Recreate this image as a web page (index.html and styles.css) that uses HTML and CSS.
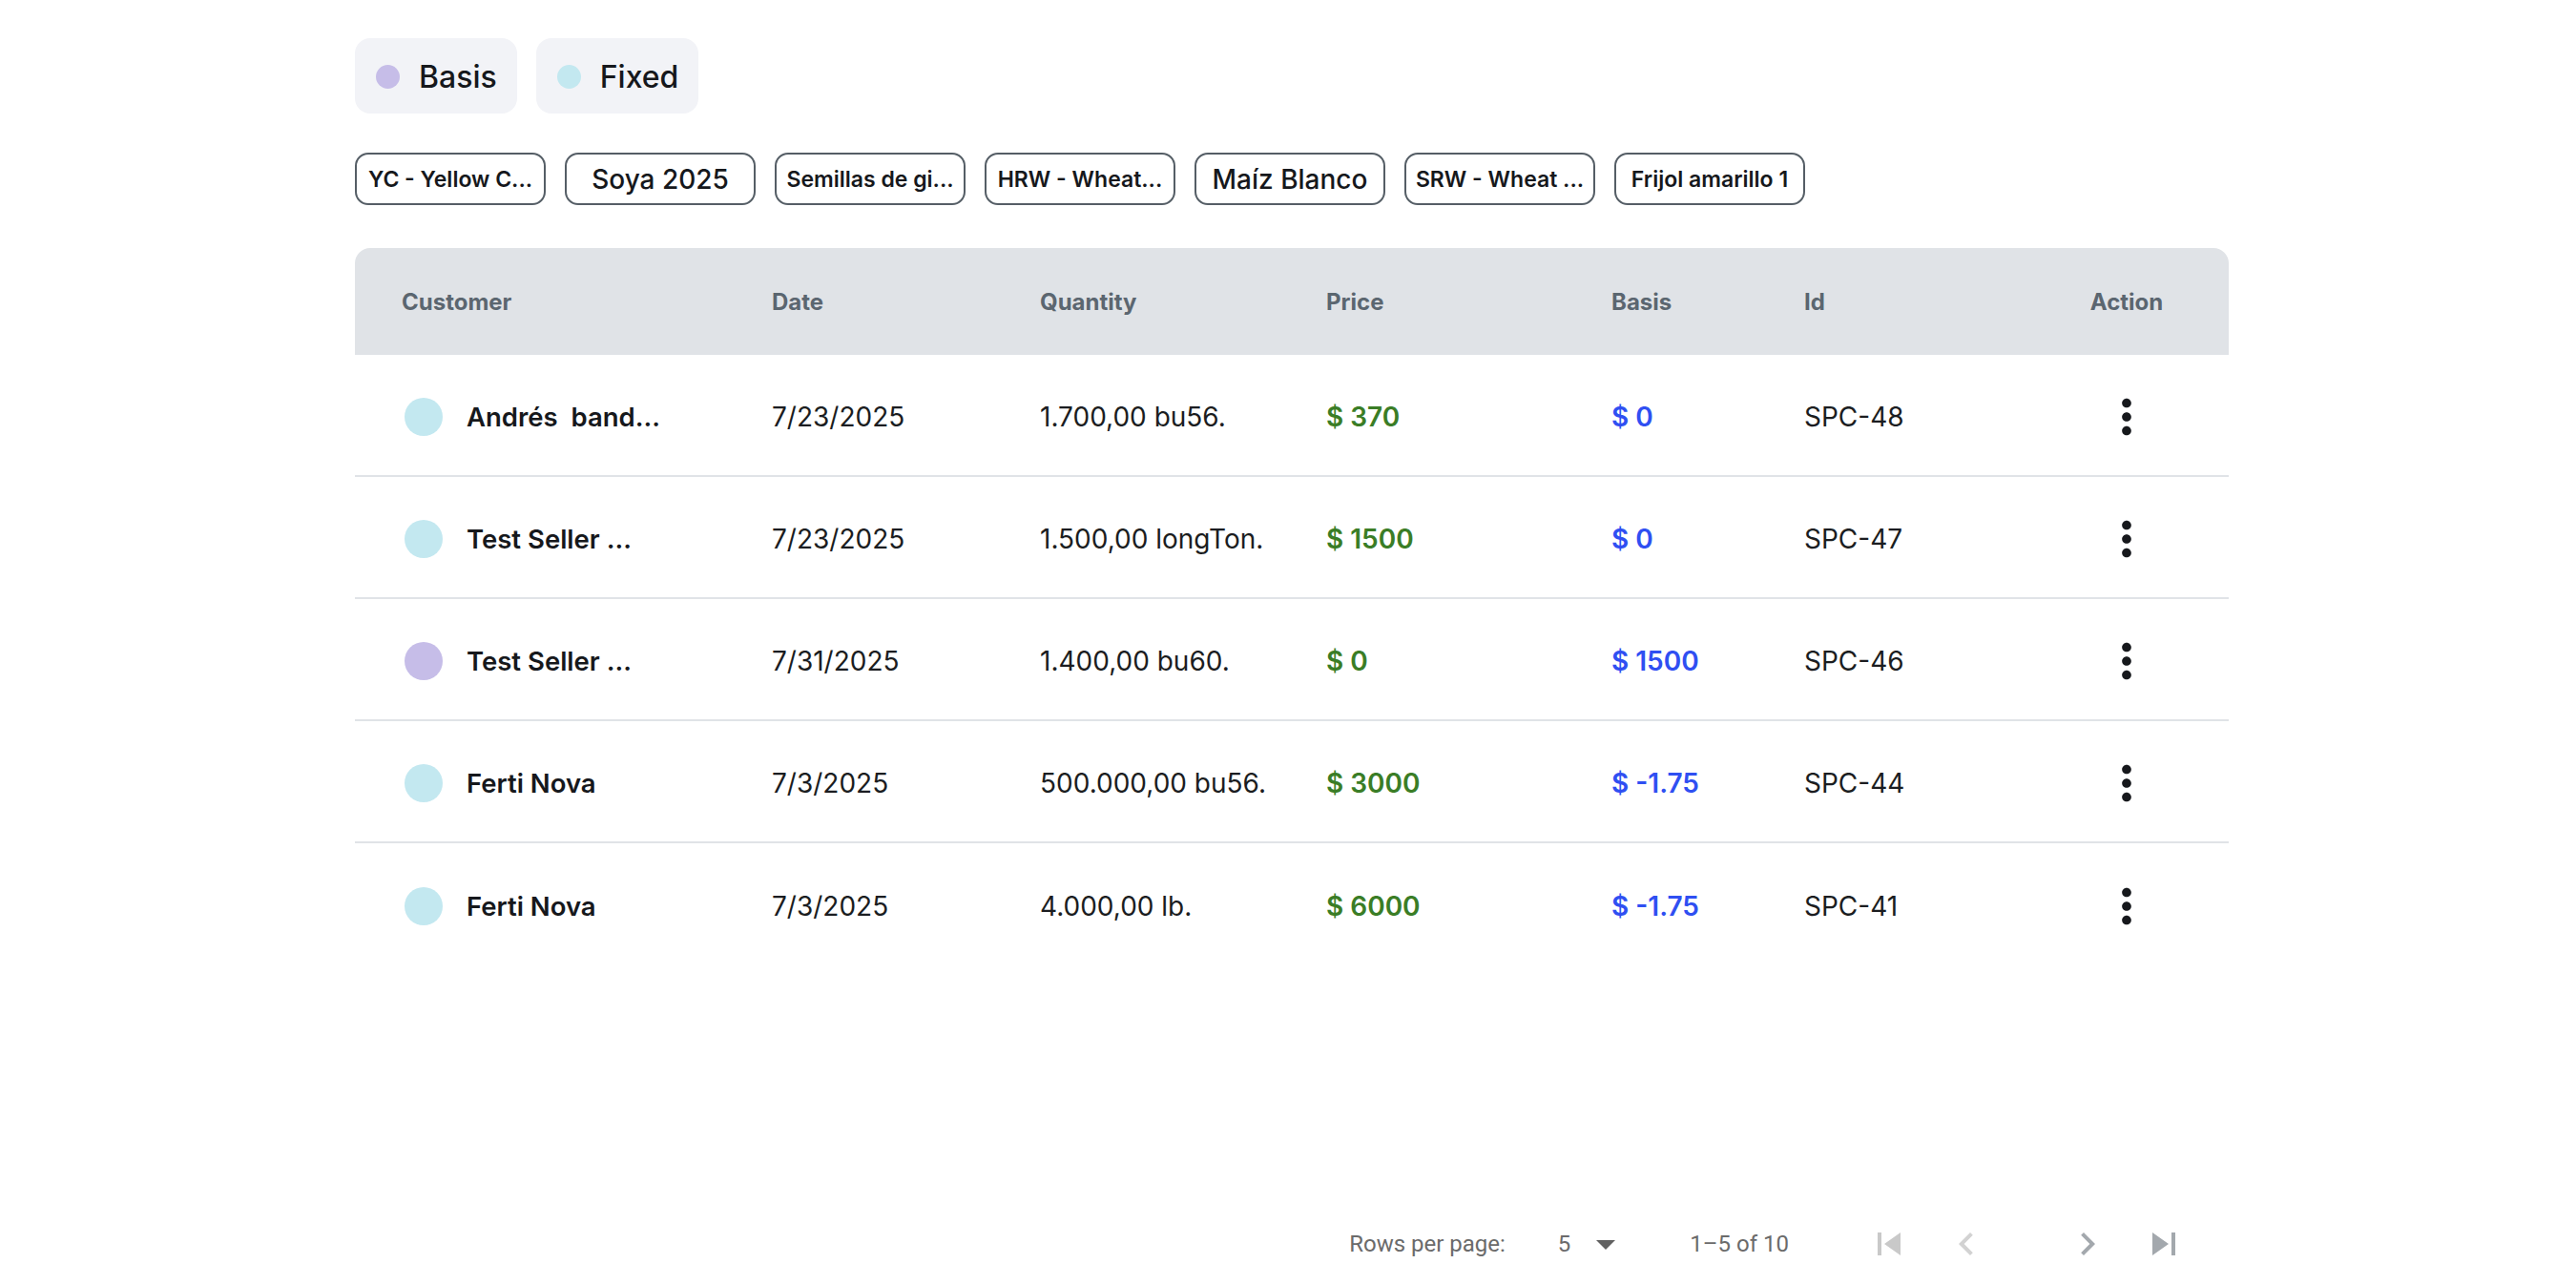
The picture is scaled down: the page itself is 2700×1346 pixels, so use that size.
FILE: index.html
```html
<!DOCTYPE html>
<html lang="es">
<head>
<meta charset="utf-8">
<title>Contracts</title>
<link rel="stylesheet" href="styles.css">
</head>
<body>
<div class="page">
  <div class="legend">
    <div class="legend-chip"><span class="dot dot-basis"></span><span>Basis</span></div>
    <div class="legend-chip"><span class="dot dot-fixed"></span><span>Fixed</span></div>
  </div>

  <div class="filters">
    <div class="filter">YC - Yellow C...</div>
    <div class="filter big">Soya 2025</div>
    <div class="filter">Semillas de gi...</div>
    <div class="filter">HRW - Wheat...</div>
    <div class="filter big">Maíz Blanco</div>
    <div class="filter">SRW - Wheat ...</div>
    <div class="filter">Frijol amarillo 1</div>
  </div>

  <div class="table">
    <div class="thead">
      <div class="cell first">Customer</div>
      <div class="cell">Date</div>
      <div class="cell">Quantity</div>
      <div class="cell">Price</div>
      <div class="cell">Basis</div>
      <div class="cell">Id</div>
      <div class="cell center">Action</div>
    </div>

    <div class="trow">
      <div class="cell first"><span class="rdot dot-fixed"></span><span class="name">Andrés&nbsp; band...</span></div>
      <div class="cell">7/23/2025</div>
      <div class="cell">1.700,00 bu56.</div>
      <div class="cell price">$ 370</div>
      <div class="cell basis">$ 0</div>
      <div class="cell">SPC-48</div>
      <div class="cell center"><svg class="more" viewBox="0 0 24 24"><path d="M12 8c1.1 0 2-.9 2-2s-.9-2-2-2-2 .9-2 2 .9 2 2 2zm0 2c-1.1 0-2 .9-2 2s.9 2 2 2 2-.9 2-2-.9-2-2-2zm0 6c-1.1 0-2 .9-2 2s.9 2 2 2 2-.9 2-2-.9-2-2-2z"/></svg></div>
    </div>

    <div class="trow">
      <div class="cell first"><span class="rdot dot-fixed"></span><span class="name">Test Seller ...</span></div>
      <div class="cell">7/23/2025</div>
      <div class="cell">1.500,00 longTon.</div>
      <div class="cell price">$ 1500</div>
      <div class="cell basis">$ 0</div>
      <div class="cell">SPC-47</div>
      <div class="cell center"><svg class="more" viewBox="0 0 24 24"><path d="M12 8c1.1 0 2-.9 2-2s-.9-2-2-2-2 .9-2 2 .9 2 2 2zm0 2c-1.1 0-2 .9-2 2s.9 2 2 2 2-.9 2-2-.9-2-2-2zm0 6c-1.1 0-2 .9-2 2s.9 2 2 2 2-.9 2-2-.9-2-2-2z"/></svg></div>
    </div>

    <div class="trow">
      <div class="cell first"><span class="rdot dot-basis"></span><span class="name">Test Seller ...</span></div>
      <div class="cell">7/31/2025</div>
      <div class="cell">1.400,00 bu60.</div>
      <div class="cell price">$ 0</div>
      <div class="cell basis">$ 1500</div>
      <div class="cell">SPC-46</div>
      <div class="cell center"><svg class="more" viewBox="0 0 24 24"><path d="M12 8c1.1 0 2-.9 2-2s-.9-2-2-2-2 .9-2 2 .9 2 2 2zm0 2c-1.1 0-2 .9-2 2s.9 2 2 2 2-.9 2-2-.9-2-2-2zm0 6c-1.1 0-2 .9-2 2s.9 2 2 2 2-.9 2-2-.9-2-2-2z"/></svg></div>
    </div>

    <div class="trow">
      <div class="cell first"><span class="rdot dot-fixed"></span><span class="name">Ferti Nova</span></div>
      <div class="cell">7/3/2025</div>
      <div class="cell">500.000,00 bu56.</div>
      <div class="cell price">$ 3000</div>
      <div class="cell basis">$ -1.75</div>
      <div class="cell">SPC-44</div>
      <div class="cell center"><svg class="more" viewBox="0 0 24 24"><path d="M12 8c1.1 0 2-.9 2-2s-.9-2-2-2-2 .9-2 2 .9 2 2 2zm0 2c-1.1 0-2 .9-2 2s.9 2 2 2 2-.9 2-2-.9-2-2-2zm0 6c-1.1 0-2 .9-2 2s.9 2 2 2 2-.9 2-2-.9-2-2-2z"/></svg></div>
    </div>

    <div class="trow last">
      <div class="cell first"><span class="rdot dot-fixed"></span><span class="name">Ferti Nova</span></div>
      <div class="cell">7/3/2025</div>
      <div class="cell">4.000,00 lb.</div>
      <div class="cell price">$ 6000</div>
      <div class="cell basis">$ -1.75</div>
      <div class="cell">SPC-41</div>
      <div class="cell center"><svg class="more" viewBox="0 0 24 24"><path d="M12 8c1.1 0 2-.9 2-2s-.9-2-2-2-2 .9-2 2 .9 2 2 2zm0 2c-1.1 0-2 .9-2 2s.9 2 2 2 2-.9 2-2-.9-2-2-2zm0 6c-1.1 0-2 .9-2 2s.9 2 2 2 2-.9 2-2-.9-2-2-2z"/></svg></div>
    </div>
  </div>

  <div class="pagination">
    <span class="pg-label">Rows per page:</span>
    <div class="pg-select"><span>5</span><svg class="drop" viewBox="0 0 24 24"><path d="M7 10l5 5 5-5z"/></svg></div>
    <span class="pg-range">1–5 of 10</span>
    <div class="pg-actions">
      <svg class="pg-icon disabled" viewBox="0 0 24 24"><path d="M6 6h2v12H6zm3.5 6l8.5 6V6z"/></svg>
      <svg class="pg-icon disabled light prev" viewBox="0 0 24 24"><path d="M15.41 7.41L14 6l-6 6 6 6 1.41-1.41L10.83 12z"/></svg>
      <svg class="pg-icon active next" viewBox="0 0 24 24"><path d="M10 6L8.59 7.41 13.17 12l-4.58 4.59L10 18l6-6z"/></svg>
      <svg class="pg-icon active last" viewBox="0 0 24 24"><path d="M6 18l8.5-6L6 6v12zM16 6v12h2V6h-2z"/></svg>
    </div>
  </div>
</div>
</body>
</html>
```

FILE: styles.css
```css
* { box-sizing: border-box; }

html, body {
  margin: 0;
  padding: 0;
  background: #ffffff;
}

body {
  font-family: Inter, "Noto Sans", "Liberation Sans", sans-serif;
  color: #16181c;
}

.page {
  width: 2700px;
  padding: 40px 0 0 372px;
}

.legend {
  display: flex;
  gap: 20px;
}

.legend-chip {
  display: flex;
  align-items: center;
  gap: 20px;
  height: 79px;
  padding: 2px 21px 0 22px;
  background: #f2f3f7;
  border-radius: 16px;
  font-size: 32px;
  font-weight: 500;
  color: #16181c;
}

.dot {
  width: 25px;
  height: 25px;
  border-radius: 50%;
  flex: none;
}

.dot-basis { background: #c6bde8; }
.dot-fixed { background: #c3e8f0; }

.filters {
  display: flex;
  gap: 20px;
  margin-top: 41px;
}

.filter {
  width: 200px;
  height: 55px;
  border: 2px solid #555e66;
  border-radius: 14px;
  display: flex;
  align-items: center;
  justify-content: center;
  padding: 0 6px;
  font-size: 23px;
  font-weight: 600;
  white-space: nowrap;
  overflow: hidden;
  color: #16181c;
}

.filter.big {
  font-size: 28px;
  font-weight: 550;
}

.table {
  width: 1964px;
  margin-top: 45px;
}

.thead,
.trow {
  display: grid;
  grid-template-columns: 437px 281px 300px 299px 202px 231px 214px;
  align-items: center;
}

.thead {
  height: 112px;
  background: #e0e3e7;
  border-radius: 16px 16px 0 0;
  font-size: 24px;
  font-weight: 700;
  color: #5b6670;
}

.trow {
  height: 128px;
  padding-top: 3px;
  border-bottom: 2px solid #e0e3e7;
  font-size: 28px;
  font-weight: 400;
  color: #1b1d21;
}

.trow.last {
  border-bottom: none;
}

.cell {
  white-space: nowrap;
}

.cell.first {
  padding-left: 49px;
  display: flex;
  align-items: center;
}

.cell.center {
  display: flex;
  justify-content: center;
  align-items: center;
}

.rdot {
  width: 40px;
  height: 40px;
  border-radius: 50%;
  margin-left: 3px;
  margin-right: 25px;
  flex: none;
}

.name {
  font-weight: 600;
  font-size: 27.5px;
  color: #16181c;
}

.price {
  color: #3a7d26;
  font-weight: 600;
}

.basis {
  color: #2f4ff2;
  font-weight: 600;
}

.more {
  width: 58px;
  height: 58px;
  fill: #16181c;
}

.pagination {
  width: 1964px;
  margin-top: 264px;
  height: 56px;
  display: flex;
  align-items: center;
  justify-content: flex-end;
  padding-right: 44px;
  font-family: Roboto, "Liberation Sans", sans-serif;
  font-size: 24px;
  color: #6b6b6b;
}

.pg-select {
  display: flex;
  align-items: center;
  margin-left: 55px;
  color: #6b6b6b;
}

.drop {
  width: 48px;
  height: 48px;
  margin-left: 13px;
  fill: #616161;
}

.pg-range {
  margin-left: 64px;
}

.pg-actions {
  display: flex;
  align-items: center;
  margin-left: 81px;
}

.pg-icon {
  width: 48px;
  height: 48px;
}

.pg-icon.disabled { fill: #c9c9c9; }
.pg-icon.light { fill: #d2d2d2; }
.pg-icon.active { fill: #a3a8ad; }

.pg-icon.prev { margin-left: 33px; }
.pg-icon.next { margin-left: 79px; }
.pg-icon.last { margin-left: 32px; }
```
